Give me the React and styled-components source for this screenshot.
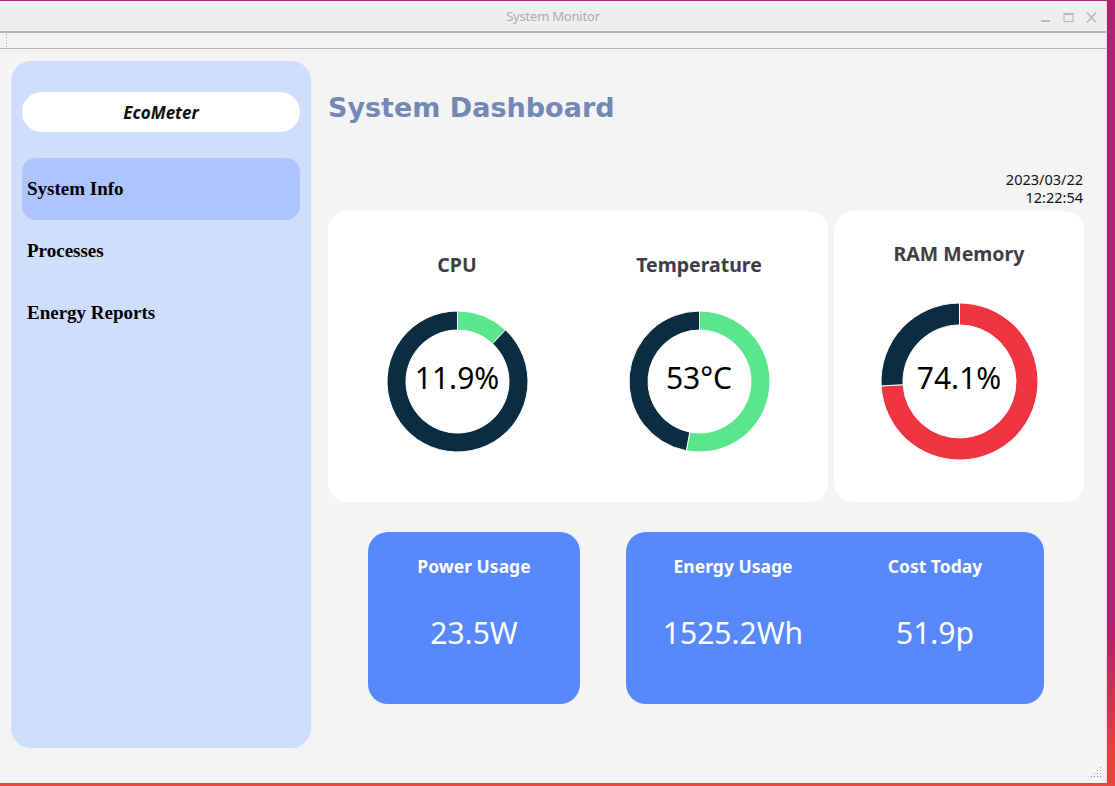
import React from 'react';
import styled, {createGlobalStyle} from 'styled-components';

const GlobalStyle = createGlobalStyle`
    html, body {
        margin: 0;
        padding: 0;
        background: #b0216f;
    }
    * { box-sizing: border-box; }
`;

const Desktop = styled.div`
    width: 1115px;
    height: 786px;
    overflow: hidden;
    background: linear-gradient(180deg, #b0216f 0%, #b0216f 80%, #e4403f 95%, #e8453f 100%);
    padding-top: 1px;
`;

const Window = styled.div`
    width: 1107px;
    height: 782px;
    display: flex;
    flex-direction: column;
    background: #f4f4f4;
    border-right: 1px solid #e2e2e2;
`;

const TitleBar = styled.div`
    height: 32px;
    flex: none;
    display: flex;
    align-items: center;
    justify-content: center;
    position: relative;
    background: #efefef;
    border-bottom: 2px solid #b4b4b4;
    font-family: "Noto Sans", sans-serif;
    font-size: 13px;
    color: #ababab;
    letter-spacing: -0.2px;
`;

const WindowControls = styled.div`
    position: absolute;
    right: 9px;
    top: 11px;
    display: flex;
    gap: 12px;
    align-items: center;
`;

const Toolbar = styled.div`
    height: 16px;
    flex: none;
    display: flex;
    align-items: center;
    padding-left: 5px;
    background: #f3f3f3;
    border-bottom: 1px solid #b8b8b8;
`;

const Grip = styled.div`
    width: 4px;
    height: 15px;
    background-image: radial-gradient(circle, #a8a8a8 0.8px, transparent 1px);
    background-size: 3px 3px;
`;

const Body = styled.div`
    flex: 1;
    display: flex;
    padding: 12px 0 0 11px;
    gap: 17px;
    position: relative;
`;

const Sidebar = styled.div`
    width: 300px;
    height: 687px;
    background: #d0defe;
    border-radius: 20px;
    padding: 31px 11px 0;
    display: flex;
    flex-direction: column;
`;

const Brand = styled.div`
    height: 40px;
    background: #ffffff;
    border-radius: 20px;
    display: flex;
    align-items: center;
    justify-content: center;
    font-family: "Noto Sans", sans-serif;
    font-style: italic;
    font-weight: 700;
    font-size: 17px;
    color: #111;
    margin-bottom: 26px;
`;

const NavItem = styled.div`
    height: 62px;
    display: flex;
    align-items: center;
    padding-left: 5px;
    border-radius: 14px;
    background: ${props => props.active ? '#adc4fe' : 'transparent'};
    font-family: "Liberation Serif", serif;
    font-weight: 700;
    font-size: 19px;
    color: #000;
`;

const Main = styled.div`
    width: 756px;
    display: flex;
    flex-direction: column;
`;

const Heading = styled.h1`
    margin: 30px 0 0 0;
    height: 34px;
    line-height: 34px;
    font-family: "DejaVu Sans", sans-serif;
    font-weight: 700;
    font-size: 27px;
    color: #7389b3;
`;

const Clock = styled.div`
    margin-top: 45px;
    align-self: flex-end;
    padding-right: 1px;
    text-align: right;
    font-family: "Noto Sans", sans-serif;
    font-size: 14.5px;
    line-height: 18px;
    color: #111;
`;

const GaugeRow = styled.div`
    margin-top: 5px;
    display: flex;
    gap: 6px;
`;

const GaugeCard = styled.div`
    width: ${props => props.width}px;
    height: 291px;
    background: #ffffff;
    border-radius: 20px;
    display: grid;
    grid-template-columns: repeat(${props => props.cols}, 1fr);
    padding: 0 ${props => props.pad}px;
`;

const GaugeColumn = styled.div`
    display: flex;
    flex-direction: column;
    align-items: center;
    padding-top: ${props => props.top}px;
    gap: ${props => props.gap}px;
`;

const GaugeTitle = styled.div`
    height: 24px;
    line-height: 24px;
    font-family: "Noto Sans", sans-serif;
    font-weight: 700;
    font-size: 19.5px;
    color: #3e3e42;
`;

const DonutStack = styled.div`
    display: grid;
    place-items: center;
    & > * { grid-area: 1 / 1; }
`;

const DonutLabel = styled.div`
    font-family: "Noto Sans", sans-serif;
    font-size: 30px;
    color: #000;
    padding-bottom: 8px;
`;

const StatRow = styled.div`
    margin-top: 30px;
    display: flex;
    justify-content: space-between;
    padding: 0 40px;
`;

const StatCard = styled.div`
    width: ${props => props.width}px;
    height: 172px;
    background: #5788fc;
    border-radius: 20px;
    display: grid;
    grid-template-columns: repeat(${props => props.cols}, 1fr);
    padding: 0 ${props => props.padR}px 0 ${props => props.padL}px;
`;

const Stat = styled.div`
    display: flex;
    flex-direction: column;
    align-items: center;
    padding-top: 22px;
    gap: 35px;
    color: #fff;
    font-family: "Noto Sans", sans-serif;
`;

const StatTitle = styled.div`
    height: 24px;
    line-height: 24px;
    font-weight: 700;
    font-size: 17.5px;
`;

const StatValue = styled.div`
    height: 40px;
    line-height: 40px;
    font-size: 30px;
`;

const ResizeGrip = styled.svg`
    position: absolute;
    right: 3px;
    bottom: 4px;
`;

const pt = (cx, cy, r, a) => {
    const rad = a * Math.PI / 180;
    return [cx + r * Math.sin(rad), cy - r * Math.cos(rad)];
};

const sector = (cx, cy, ro, ri, a0, a1) => {
    const large = a1 - a0 > 180 ? 1 : 0;
    const [x0, y0] = pt(cx, cy, ro, a0);
    const [x1, y1] = pt(cx, cy, ro, a1);
    const [x2, y2] = pt(cx, cy, ri, a1);
    const [x3, y3] = pt(cx, cy, ri, a0);
    return `M${x0} ${y0} A${ro} ${ro} 0 ${large} 1 ${x1} ${y1} L${x2} ${y2} A${ri} ${ri} 0 ${large} 0 ${x3} ${y3} Z`;
};

const Donut = ({value, color, outer, inner, label}) => {
    const size = Math.ceil(outer * 2 + 2);
    const c = size / 2;
    const a = value * 3.6;
    return (
        <DonutStack>
            <svg width={size} height={size} viewBox={`0 0 ${size} ${size}`}>
                <path d={sector(c, c, outer, inner, 0, a)} fill={color} stroke="#fff" strokeWidth="1" />
                <path d={sector(c, c, outer, inner, a, 360)} fill="#0a2d42" stroke="#fff" strokeWidth="1" />
            </svg>
            <DonutLabel>{label}</DonutLabel>
        </DonutStack>
    );
};

const gripDots = [[8, 0], [5, 3], [8, 3], [2, 6], [5, 6], [8, 6], [-1, 9], [2, 9], [5, 9], [8, 9]];

export default function App() {
    return (
        <Desktop>
            <GlobalStyle />
            <Window>
                <TitleBar>
                    System Monitor
                    <WindowControls>
                        <svg width="11" height="11" viewBox="0 0 11 11">
                            <rect x="1" y="8" width="9" height="2" fill="#b9b9b9" />
                        </svg>
                        <svg width="11" height="11" viewBox="0 0 11 11">
                            <rect x="1" y="1.5" width="9" height="8" fill="none" stroke="#b9b9b9" strokeWidth="1.2" />
                            <rect x="1" y="1.5" width="9" height="1.5" fill="#b9b9b9" />
                        </svg>
                        <svg width="11" height="11" viewBox="0 0 11 11">
                            <path d="M1 0.5 L10 10.5 M10 0.5 L1 10.5" stroke="#b9b9b9" strokeWidth="1.6" />
                        </svg>
                    </WindowControls>
                </TitleBar>
                <Toolbar>
                    <Grip />
                </Toolbar>
                <Body>
                    <Sidebar>
                        <Brand>EcoMeter</Brand>
                        <NavItem active>System Info</NavItem>
                        <NavItem>Processes</NavItem>
                        <NavItem>Energy Reports</NavItem>
                    </Sidebar>
                    <Main>
                        <Heading>System Dashboard</Heading>
                        <Clock>
                            2023/03/22<br />12:22:54
                        </Clock>
                        <GaugeRow>
                            <GaugeCard width={500} cols={2} pad={8}>
                                <GaugeColumn top={42} gap={33}>
                                    <GaugeTitle>CPU</GaugeTitle>
                                    <Donut value={11.9} color="#5ae68c" outer={70.5} inner={51.5} label="11.9%" />
                                </GaugeColumn>
                                <GaugeColumn top={42} gap={33}>
                                    <GaugeTitle>Temperature</GaugeTitle>
                                    <Donut value={53} color="#5ae68c" outer={70.5} inner={51.5} label="53°C" />
                                </GaugeColumn>
                            </GaugeCard>
                            <GaugeCard width={250} cols={1} pad={0}>
                                <GaugeColumn top={31} gap={36}>
                                    <GaugeTitle>RAM Memory</GaugeTitle>
                                    <Donut value={74.1} color="#ef3340" outer={78.5} inner={56.5} label="74.1%" />
                                </GaugeColumn>
                            </GaugeCard>
                        </GaugeRow>
                        <StatRow>
                            <StatCard width={212} cols={1} padL={0} padR={0}>
                                <Stat>
                                    <StatTitle>Power Usage</StatTitle>
                                    <StatValue>23.5W</StatValue>
                                </Stat>
                            </StatCard>
                            <StatCard width={418} cols={2} padL={6} padR={8}>
                                <Stat>
                                    <StatTitle>Energy Usage</StatTitle>
                                    <StatValue>1525.2Wh</StatValue>
                                </Stat>
                                <Stat>
                                    <StatTitle>Cost Today</StatTitle>
                                    <StatValue>51.9p</StatValue>
                                </Stat>
                            </StatCard>
                        </StatRow>
                    </Main>
                    <ResizeGrip width="12" height="12" viewBox="-1 0 12 12">
                        {gripDots.map(([x, y], i) => (
                            <rect key={i} x={x} y={y} width="1" height="1" fill="#999" />
                        ))}
                    </ResizeGrip>
                </Body>
            </Window>
        </Desktop>
    );
}
